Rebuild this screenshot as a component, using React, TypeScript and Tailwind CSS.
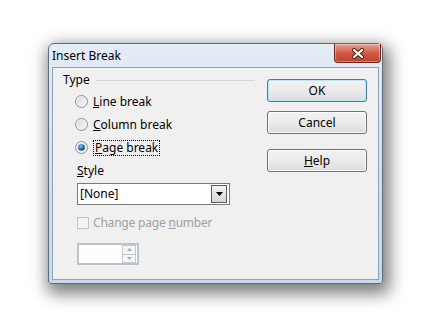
import React from 'react'

const font = { fontFamily: '"Noto Sans", "Open Sans", sans-serif' }

function Radio({ checked }: { checked?: boolean }) {
  return (
    <svg width="13" height="13" viewBox="0 0 13 13">
      <defs>
        <linearGradient id={checked ? 'rg1' : 'rg0'} x1="0" y1="0" x2="1" y2="1">
          <stop offset="0" stopColor="#d9d9d9" />
          <stop offset="1" stopColor="#f7f7f7" />
        </linearGradient>
        <radialGradient id="dot" cx="0.4" cy="0.35" r="0.7">
          <stop offset="0" stopColor="#8ed0f4" />
          <stop offset="0.5" stopColor="#1f7bbd" />
          <stop offset="1" stopColor="#0b3d72" />
        </radialGradient>
      </defs>
      <circle cx="6.5" cy="6.5" r="6" fill="#f4f4f4" stroke="#8e8f8f" />
      <circle cx="6.5" cy="6.5" r="4.5" fill={`url(#${checked ? 'rg1' : 'rg0'})`} />
      {checked && <circle cx="6.5" cy="6.5" r="3.3" fill="url(#dot)" />}
    </svg>
  )
}

function Btn({ children, primary }: { children: React.ReactNode; primary?: boolean }) {
  return (
    <div
      className={`flex h-[23px] w-[100px] items-center justify-center rounded-[3px] border bg-gradient-to-b from-[#f2f2f2] via-[#ebebeb] to-[#dcdcdc] text-[12px] text-black ${
        primary ? 'border-[#3c7fb1] shadow-[inset_0_0_0_1px_#bfe6f7]' : 'border-[#707070] shadow-[inset_0_0_0_1px_#fcfcfc]'
      }`}
    >
      {children}
    </div>
  )
}

export default function App() {
  return (
    <div className="h-[332px] w-[425px] bg-white pl-[48px] pt-[43px]" style={font}>
      <div className="flex h-[241px] w-[335px] flex-col rounded-t-[6px] rounded-b-[3px] border border-[#5f6b78] bg-gradient-to-b from-[#e4ecf6] via-[#d3e0ef] to-[#c9d8ea] shadow-[3px_6px_16px_4px_rgba(0,0,0,0.5)]">
        <div className="flex h-[23px] items-start justify-between pl-[3px]">
          <span className="mt-[3px] text-[12px] text-black">Insert Break</span>
          <div className="mr-[1px] flex h-[19px] w-[47px] items-center justify-center rounded-b-[4px] border border-t-0 border-[#6b261b] bg-gradient-to-b from-[#e8a294] via-[#cf5a44] to-[#c0402b] shadow-[inset_0_0_0_1px_rgba(255,255,255,0.35)]">
            <svg width="14" height="11" viewBox="0 0 14 11">
              <path d="M3 2 L11 9 M11 2 L3 9" stroke="#4a1d16" strokeWidth="4" strokeLinecap="round" />
              <path d="M3 2 L11 9 M11 2 L3 9" stroke="#ffffff" strokeWidth="2.2" strokeLinecap="round" />
            </svg>
          </div>
        </div>
        <div className="mx-[3px] mb-[3px] flex flex-1 border border-[#8fa2bb] bg-[#f0f0f0] text-[12px] text-black">
          <div className="flex w-[202px] flex-col pl-[10px] pt-[4px]">
            <div className="flex h-[16px] items-center">
              <span>Type</span>
              <div className="ml-[6px] h-px flex-1 bg-[#cfd6dc]" />
            </div>
            <div className="mt-[2px] flex flex-col pl-[12px]">
              <div className="flex h-[23px] items-center gap-[5px]">
                <Radio />
                <span><u>L</u>ine break</span>
              </div>
              <div className="flex h-[23px] items-center gap-[5px]">
                <Radio />
                <span><u>C</u>olumn break</span>
              </div>
              <div className="flex h-[23px] items-center gap-[5px]">
                <Radio checked />
                <span className="border border-dotted border-black px-px leading-[14px]"><u>P</u>age break</span>
              </div>
            </div>
            <div className="mt-[3px] flex h-[18px] items-center pl-[14px]">
              <span><u>S</u>tyle</span>
            </div>
            <div className="ml-[14px] mt-[3px] flex h-[22px] w-[153px] items-center justify-between border border-[#7a7a7a] bg-white pl-[2px] pr-[2px]">
              <span>[None]</span>
              <div className="flex h-[18px] w-[16px] items-center justify-center border border-[#5c5c5c] bg-gradient-to-b from-[#f4f4f4] to-[#d6d6d6]">
                <svg width="7" height="4" viewBox="0 0 7 4">
                  <path d="M0 0 H7 L3.5 4 Z" fill="#000" />
                </svg>
              </div>
            </div>
            <div className="mt-[7px] flex h-[21px] items-center gap-[4px] pl-[14px] text-[#a0a0a0]">
              <div className="h-[12px] w-[12px] border border-[#c4c4c4] bg-[#f4f4f4]" />
              <span className="tracking-[-0.2px]">Change page <u>n</u>umber</span>
            </div>
            <div className="ml-[14px] mt-[10px] flex h-[22px] w-[62px] items-center justify-end border-2 border-[#b9c3cf] bg-white pr-[1px]">
              <div className="flex h-[18px] w-[14px] flex-col">
                <div className="flex flex-1 items-center justify-center border border-[#c8c8c8] bg-[#f5f5f5]">
                  <svg width="5" height="3" viewBox="0 0 5 3"><path d="M0 3 L2.5 0 L5 3 Z" fill="#a8a8a8" /></svg>
                </div>
                <div className="flex flex-1 items-center justify-center border border-t-0 border-[#c8c8c8] bg-[#f5f5f5]">
                  <svg width="5" height="3" viewBox="0 0 5 3"><path d="M0 0 L5 0 L2.5 3 Z" fill="#a8a8a8" /></svg>
                </div>
              </div>
            </div>
          </div>
          <div className="ml-[12px] flex flex-col pt-[11px]">
            <Btn primary>OK</Btn>
            <div className="mt-[9px]">
              <Btn>Cancel</Btn>
            </div>
            <div className="mt-[15px]">
              <Btn><span><u>H</u>elp</span></Btn>
            </div>
          </div>
        </div>
      </div>
    </div>
  )
}
